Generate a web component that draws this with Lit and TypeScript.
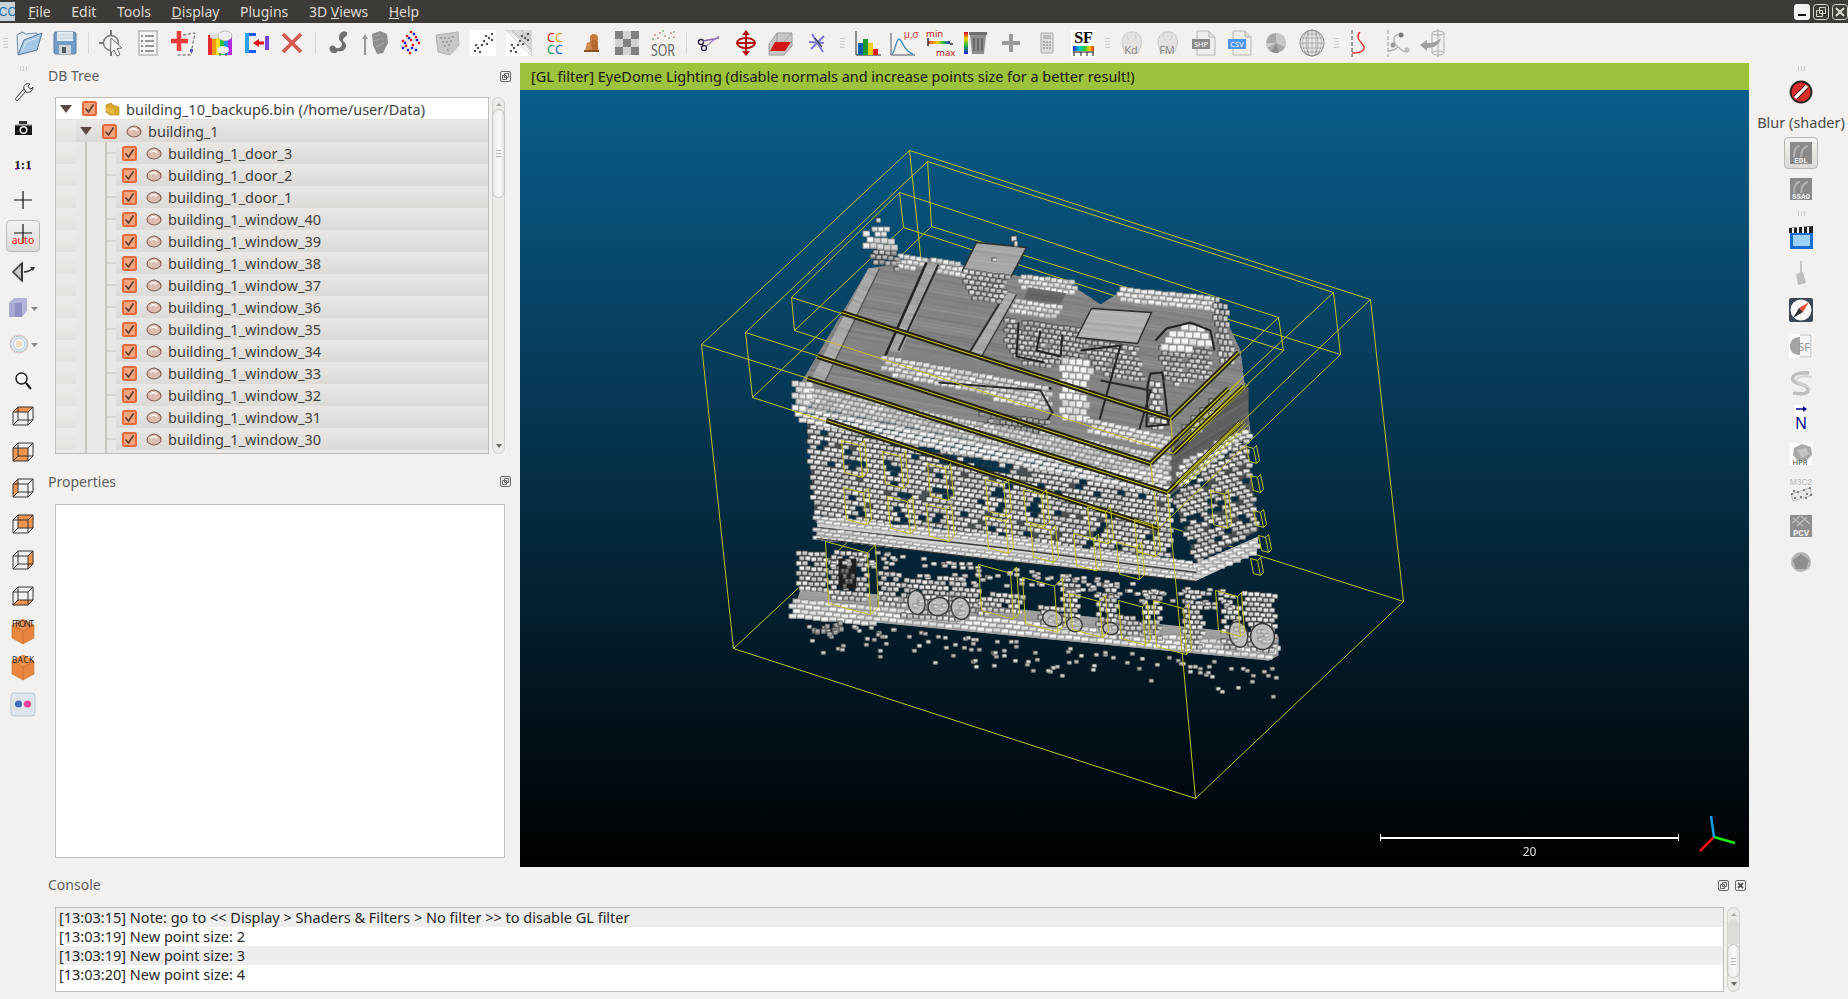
import { LitElement, css, html, svg, TemplateResult } from 'lit';
import { customElement } from 'lit/decorators.js';

type Pt = [number, number];

const bold = 'font-family="Liberation Sans" font-weight="700"';

// wire cube used by the view buttons, face says which side is orange
const cube = (face: string) => {
  const faces: Record<string, string> = {
    top: '6,12 11,7 26,7 21,12',
    front: '6,12 21,12 21,25 6,25',
    left: '6,12 11,7 11,20 6,25',
    back: '11,7 26,7 26,20 11,20',
    right: '21,12 26,7 26,20 21,25',
    bottom: '6,25 11,20 26,20 21,25',
  };
  return svg`<polygon points=${faces[face]} fill="#f0944e"/>
    <path d="M6 12h15v13H6zM11 7h15v13H11zM6 12l5-5M21 12l5-5M21 25l5-5M6 25l5-5" fill="none" stroke="#333" stroke-width="1"/>`;
};

const isoCube = (label: string) => svg`
  <polygon points="16,3 27,9 27,22 16,28 5,22 5,9" fill="#e8853f" stroke="#c9772f" stroke-width=".6"/>
  <polygon points="16,3 27,9 16,15 5,9" fill="#ee9450"/>
  <path d="M16 15v13M5 9l11 6 11-6" stroke="#c46c2a" fill="none" stroke-width=".7"/>
  <text x="16" y="10.500" text-anchor="middle" font-size="8" ${bold} fill="#222" textLength="22">${label}</text>`;

const brain = (label: string) => svg`
  <path d="M7 20C4 13 8 5 15 5c8-1 12 6 10 14l-3 7H9z" fill="#e4e3e1" stroke="#c9c8c5"/>
  <path d="M12 7c-2 3 0 6 2 6M19 7c2 3 0 6-2 6" stroke="#cfcecb" fill="none"/>
  <text x="15" y="27" text-anchor="middle" font-size="11" ${bold} fill="#8a8a8a">${label}</text>`;

const doc = (label: string, fill: string) => svg`
  <path d="M9 4h12l6 6v18H9z" fill="#eeeeec" stroke="#b5b5b3"/>
  <path d="M21 4v6h6" fill="#dcdcda" stroke="#b5b5b3"/>
  <rect x="4" y="12" width="18" height="10" fill=${fill}/>
  <text x="13" y="20" text-anchor="middle" font-size="7.5" ${bold} fill="#fff">${label}</text>`;

const greySquare = (label: string) => svg`
  <rect x="5" y="5" width="22" height="22" fill="#8a8a8a"/>
  <path d="M9 20c0-8 3-11 6-11M16 20c0-7 3-10 7-11" stroke="#b2b2b2" stroke-width="2" fill="none"/>
  <text x="16" y="26" text-anchor="middle" font-size="7.5" font-family="Liberation Mono" font-weight="700" fill="#f4f4f4">${label}</text>`;

const dots = (pts: number[][], fill: string, r = 1.1) =>
  pts.map((p) => svg`<rect x=${p[0] - r} y=${p[1] - r} width=${r * 2} height=${r * 2} fill=${fill}/>`);

const scatter = [[8, 24], [11, 21], [13, 25], [15, 18], [17, 14], [20, 17], [22, 11], [25, 7], [25, 13], [19, 9], [9, 18]];

const ICONS: Record<string, TemplateResult> = {
  open: svg`<path d="M5 27 4 8l5-3 4 2 11-1 1 5" fill="#e2ebf2" stroke="#6a8aa6"/>
    <path d="M5 28l6-15 18-7-5 17z" fill="#a6c8e4" stroke="#55789a"/>
    <path d="M9 24l4-9 13-5" stroke="#d8e8f4" fill="none"/>`,
  save: svg`<rect x="5" y="5" width="22" height="22" rx="2" fill="#6f9dc8" stroke="#5a7a9b"/>
    <rect x="8" y="5" width="16" height="9" fill="#e4ebf2"/><path d="M8 8h16M8 11h16" stroke="#b8c8d8"/>
    <rect x="10" y="18" width="12" height="9" fill="#cfd3d6"/><rect x="13" y="20" width="4" height="6" fill="#4f5a66"/>`,
  pick: svg`<circle cx="15" cy="16" r="7.500" fill="#f0f0ee" stroke="#777" stroke-width="1.400"/>
    <path d="M15 3v6M15 23v6M3 16h5" stroke="#777" stroke-width="2"/>
    <path d="M15 11l11 10-5 .6 3 6-3 1.400-3-6-3.500 3z" fill="#fff" stroke="#666"/>`,
  list: svg`<rect x="7" y="4" width="18" height="24" fill="#f6f6f4" stroke="#999"/>
    <path d="M13 9h9M13 14h9M13 19h9M13 24h9" stroke="#777" stroke-width="1.400"/>
    <path d="M9 9h2M9 14h2M9 19h2M9 24h2" stroke="#666" stroke-width="1.600"/>`,
  segment: svg`<path d="M11 4v20M3 14h17" stroke="#ee3b3b" stroke-width="4.500"/>
    <path d="M15 8l12-2-3 15-1 7H9" stroke="#555" stroke-dasharray="3 2" fill="none"/><rect x="22" y="22" width="3" height="3" fill="#5a5ae0"/>`,
  sheep: svg`<rect x="4" y="8" width="4" height="20" fill="#e82a2a"/><rect x="8" y="8" width="4" height="20" fill="#f59a10"/><rect x="12" y="8" width="4" height="20" fill="#f2e020"/>
    <rect x="16" y="8" width="4" height="20" fill="#28c040"/><rect x="20" y="8" width="4" height="20" fill="#1a8cf0"/><rect x="24" y="8" width="4" height="20" fill="#b02ae0"/>
    <ellipse cx="21" cy="9" rx="7" ry="5" fill="#eee" stroke="#888" stroke-width=".5"/><ellipse cx="10" cy="9" rx="4" ry="3" fill="#ddd"/>
    <ellipse cx="19" cy="23" rx="6" ry="4" fill="#f4f4f4"/><path d="M16 26v3M22 26v3" stroke="#555" stroke-width="1.200"/>`,
  merge: svg`<path d="M5 6h11v3H9v14h7v3H5z" fill="#1b5cf0"/><rect x="5" y="6" width="4" height="20" fill="#2aa0f0"/>
    <rect x="25" y="9" width="4" height="14" fill="#7244e0"/><path d="M13 16l6-4v2.500h5v3h-5V20z" fill="#e8121c"/>`,
  del: svg`<path d="M7 7l18 18M25 7 7 25" stroke="#d5584e" stroke-width="3.600"/>`,
  seg2: svg`<path d="M19 5c3-2 6 0 5 3-1 2-4 3-4 5s3 2 3 6-4 6-8 5c-1 2-5 3-7 1s-2-5 0-6 4 0 5 2c3 1 6-1 6-4 0-2-3-3-3-6 0-3 1-5 3-6z" fill="#707070"/>`,
  normal: svg`<path d="M6 28V10" stroke="#999" stroke-width="2"/><path d="M3 12l3-5 3 5z" fill="#999"/>
    <path d="M13 7l8-3 7 3 1 9-5 10-6 1-4-9z" fill="#8e8e8e"/><path d="M16 9l5-2M15 14l9-3M17 20l8-4" stroke="#aaa"/>`,
  spatter: svg`${dots([[16, 5], [12, 9], [21, 10], [8, 14], [16, 13], [24, 16], [11, 19], [18, 18], [15, 26]], '#e01818', 1.2)}${dots([[19, 7], [14, 11], [22, 13], [10, 16], [17, 21], [21, 23], [13, 23], [8, 21]], '#1818d8', 1.2)}`,
  tile: svg`<path d="M5 8 27 5l1 13-9 10-12-3z" fill="#c8c8c6" stroke="#b2b2b0"/>${dots([[10, 11], [14, 11], [18, 11], [22, 10], [12, 15], [16, 15], [20, 14], [14, 19], [18, 18], [17, 23]], '#8c8c8c', .8)}`,
  pts1: svg`<rect x="3" y="3" width="26" height="26" fill="#fff"/>${dots(scatter, '#555')}`,
  pts2: svg`<rect x="3" y="3" width="26" height="26" fill="#fff"/><path d="M3 3h26v26C24 18 14 9 3 3z" fill="#d9d9d9"/><path d="M9 3l20 20M18 3 29 13M3 3l26 26" stroke="#aaa" stroke-width=".6"/>${dots(scatter, '#555')}`,
  ccc: svg`<text x="8" y="15" font-size="12.500" ${bold} fill="#e01818">C</text><text x="16" y="15" font-size="12.500" ${bold} fill="#e6a010">C</text>
    <text x="8" y="27" font-size="12.500" ${bold} fill="#1a9a50">C</text><text x="16" y="27" font-size="12.500" ${bold} fill="#1a60d0">C</text>`,
  figure: svg`<circle cx="19" cy="11" r="4" fill="#c87a3a"/><rect x="15" y="13" width="8" height="11" rx="2" fill="#b56a30"/><path d="M10 24l2-8 4-2 1 10z" fill="#d08a4a"/><rect x="9" y="23" width="15" height="2" fill="#8a5526"/>`,
  checker: svg`<rect x="4" y="4" width="24" height="24" fill="#d2d2d2"/>
    <path d="M4 4h8v8H4zM20 4h8v8h-8zM12 12h8v8h-8zM4 20h8v8H4zM20 20h8v8h-8z" fill="#808080"/>`,
  sor: svg`<text x="16" y="29" text-anchor="middle" font-size="17" ${bold} fill="#666" textLength="24" lengthAdjust="spacingAndGlyphs">SOR</text>
    ${dots([[8, 8], [13, 6], [18, 9], [24, 6], [27, 10], [11, 11]], '#d09090', .9)}${dots([[6, 12], [16, 4], [22, 11], [27, 5]], '#90b890', .9)}`,
  cut: svg`<circle cx="7" cy="15" r="2.500" fill="none" stroke="#2a1a3a" stroke-width="1.300"/><circle cx="10" cy="21" r="2.500" fill="none" stroke="#2a1a3a" stroke-width="1.300"/>
    <path d="M9 14 25 11" stroke="#8060a0" stroke-width="1.500"/><path d="M12 19 25 9" stroke="#a080b8" stroke-width="1.500"/>`,
  move: svg`<path d="M16 4v24M7 16h18" stroke="#b01010" stroke-width="2"/><path d="M12 8l4-5 4 5zM12 24l4 5 4-5z" fill="#b01010"/>
    <ellipse cx="16" cy="16" rx="9" ry="5" fill="none" stroke="#b01010" stroke-width="2"/>`,
  box: svg`<path d="M3 17 11 6h15v13l-8 9H3z" fill="#c6c6c4" stroke="#9a9a98"/><path d="M4 24l5-9h16l-6 9z" fill="#d21616"/><path d="M11 6v9M26 6l-8 9" stroke="#9a9a98"/>`,
  star: svg`<path d="M10 7l11 18M22 9 9 22M7 15l15 1" stroke="#7a7ad0" stroke-width="2"/><path d="M13 11l7 9" stroke="#333" stroke-width="1.200"/>`,
  hist: svg`<path d="M5 4v24h25" stroke="#222" fill="none"/><rect x="7" y="16" width="5" height="12" fill="#0b5fa8"/><rect x="12" y="12" width="5" height="16" fill="#1a9a30"/><rect x="17" y="16" width="5" height="12" fill="#e8d010"/><rect x="22" y="22" width="5" height="6" fill="#e01818"/>`,
  stats: svg`<path d="M4 6v22h24" stroke="#556" fill="none"/><path d="M5 27c3-1 4-15 7-15s5 13 14 15" stroke="#3a86b8" fill="none" stroke-width="1.300"/>
    <text x="17" y="11" font-size="10" font-family="Liberation Sans" fill="#d84040">μ,σ</text>`,
  minmax: svg`<text x="3" y="10" font-size="9.500" ${bold} fill="#c01818">min</text><text x="13" y="29" font-size="9.500" ${bold} fill="#c01818">max</text>
    <defs><linearGradient id="mm"><stop offset="0" stop-color="#d33"/><stop offset=".4" stop-color="#fc0"/><stop offset=".7" stop-color="#2b4"/><stop offset="1" stop-color="#33c"/></linearGradient></defs>
    <rect x="5" y="14" width="22" height="3" fill="url(#mm)"/><path d="M5 11v8M27 17h3" stroke="#333" stroke-width="1.500"/>`,
  sfdel: svg`<defs><linearGradient id="bar" x1="0" y1="0" x2="0" y2="1"><stop offset="0" stop-color="#c02"/><stop offset=".3" stop-color="#fc0"/><stop offset=".6" stop-color="#2b4"/><stop offset="1" stop-color="#22c"/></linearGradient></defs>
    <rect x="5" y="5" width="4" height="22" fill="url(#bar)"/><path d="M11 8h16l-2 19H13z" fill="#8e8e8c"/><rect x="10" y="5" width="18" height="3" fill="#6e6e6c"/><path d="M15 11v13M19 11v13M23 11v13" stroke="#555" stroke-width="1.300"/>`,
  plus: svg`<path d="M16 7v18M7 16h18" stroke="#999" stroke-width="4"/>`,
  calc: svg`<rect x="10" y="6" width="12" height="20" rx="1" fill="#dcdcda" stroke="#aaa"/><rect x="12" y="8" width="8" height="4" fill="#bbb"/><path d="M12 15h8M12 18h8M12 21h8" stroke="#999" stroke-width="1.400" stroke-dasharray="2 1"/>`,
  sf: svg`<rect x="4" y="3" width="25" height="27" fill="#fff"/><text x="16.500" y="16" text-anchor="middle" font-size="16" font-family="Liberation Serif" font-weight="700" fill="#000">SF</text>
    <defs><linearGradient id="sfb"><stop offset="0" stop-color="#22c"/><stop offset=".3" stop-color="#0cd"/><stop offset=".55" stop-color="#2c3"/><stop offset=".8" stop-color="#fc0"/><stop offset="1" stop-color="#e22"/></linearGradient></defs>
    <rect x="6" y="19" width="21" height="5" fill="url(#sfb)"/><path d="M6 25h21M7 25v4M14 25v4M20 25v4M26 25v4" stroke="#111"/>`,
  kd: brain('Kd'),
  fm: brain('FM'),
  shp: doc('SHP', '#8a8a8a'),
  csv: doc('CSV', '#4f95ee'),
  disk: svg`<circle cx="16" cy="16" r="10" fill="#a8a8a8"/><path d="M16 16V6a10 10 0 0 1 9 14z" fill="#c8c8c8"/><path d="M16 16l-9 5a10 10 0 0 1-1-5z" fill="#d0d0d0"/><path d="M16 16l3 9.500a10 10 0 0 1-8-1z" fill="#8e8e8e"/>`,
  globe: svg`<ellipse cx="16" cy="16" rx="12" ry="13" fill="#e8e8e6" stroke="#888"/><ellipse cx="16" cy="16" rx="6" ry="13" fill="none" stroke="#999" stroke-width=".7"/><ellipse cx="16" cy="16" rx="9.500" ry="13" fill="none" stroke="#999" stroke-width=".7"/>
    <path d="M4 16h24M5 11h22M5 21h22M8 7h16M8 25h16M16 3v26M12 3v26M20 3v26" stroke="#999" stroke-width=".7"/>`,
  sred: svg`<path d="M7 3v27" stroke="#444" stroke-dasharray="4 2"/><path d="M15 5c-5 5 0 9 3 13s0 8-11 8" stroke="#ee2a2a" fill="none" stroke-width="1.400"/>`,
  sgrey: svg`<path d="M7 3v27" stroke="#999" stroke-dasharray="4 2"/><path d="M17 7c-7 4-4 10 0 13s4 5 9 5M17 20c-3 3-5 4-10 4" stroke="#aaa" fill="none" stroke-width="1.200"/><circle cx="20" cy="8" r="2.500" fill="#777"/><circle cx="26" cy="23" r="2.500" fill="#bbb"/><circle cx="12" cy="18" r="2.500" fill="#999"/>`,
  unroll: svg`<ellipse cx="21" cy="6" rx="6" ry="2" fill="none" stroke="#aaa"/><path d="M15 6v20M27 6v20M21 2v28" stroke="#aaa"/><ellipse cx="21" cy="26" rx="6" ry="2" fill="none" stroke="#aaa"/>
    <path d="M3 18l7-5v3c6 0 10-1 14-5-1 6-6 10-14 10v3z" fill="#a0a09e"/>`,
  wrench: svg`<path d="M10 23l9-10" stroke="#333" stroke-width="3.600" stroke-linecap="round"/><path d="M10 23l9-10" stroke="#f2f2f0" stroke-width="2" stroke-linecap="round"/>
    <path d="M17 13c-1-4 2-6 6-5l-2 2 1 2 2 1 2-2c0 4-3 6-7 5z" fill="#f2f2f0" stroke="#333"/>`,
  camera: svg`<rect x="8" y="12" width="17" height="11" fill="#161616"/><rect x="12" y="9" width="8" height="3" fill="#333"/><rect x="8" y="12" width="17" height="1.500" fill="#bbb"/><circle cx="16.500" cy="18" r="4" fill="#eee"/><circle cx="16.500" cy="18" r="2.500" fill="#111"/>`,
  oneone: svg`<text x="16" y="21" text-anchor="middle" font-size="13" font-family="Liberation Serif" font-weight="700" fill="#111">1:1</text><path d="M8 21h3M21 21h3" stroke="#90c"/>`,
  cross: svg`<path d="M16 7v18M7 16h18" stroke="#111" stroke-width="1.200"/>`,
  auto: svg`<path d="M16 4v19M7 13h18" stroke="#111" stroke-width="1.200"/><text x="16" y="24" text-anchor="middle" font-size="10.500" ${bold} fill="#f01010">auto</text>`,
  persp: svg`<path d="M15 7 6 16l9 9z" fill="#c8c8c6" stroke="#333" stroke-width="1.500"/><path d="M15 7v18" stroke="#333" stroke-width="2"/><path d="M17 16c3 0 7-2 9-4" stroke="#333" stroke-width="1.400" fill="none"/><path d="M23 11h5l-2 4z" fill="#333"/>`,
  glass: svg`<circle cx="14.500" cy="14.500" r="5.500" fill="#fff" stroke="#111" stroke-width="1.400"/><path d="M19 19l5 6" stroke="#111" stroke-width="2"/>`,
  front: isoCube('FRONT'),
  backc: isoCube('BACK'),
  flickr: svg`<rect x="4" y="5" width="24" height="23" rx="3" fill="#dfe5ea" stroke="#bcc6cf"/><circle cx="11.500" cy="16" r="3.600" fill="#3f6fc0"/><circle cx="20.500" cy="16" r="3.600" fill="#f0409a"/>`,
  stop: svg`<circle cx="16" cy="16" r="10.500" fill="#dd2c2c" stroke="#222" stroke-width="1.800"/><path d="M10 22 22 10" stroke="#fff" stroke-width="3"/><path d="M9 20l11-11M12 23l11-11" stroke="#222" stroke-width="1"/>`,
  edl: greySquare('EDL'),
  ssao: greySquare('SSAO'),
  clap: svg`<rect x="5" y="11" width="23" height="16" fill="#1a6ed0"/><rect x="8" y="13" width="17" height="11" fill="#9cd2f6"/><path d="M4 6 28 4v7H4z" fill="#222"/><path d="M8 6v5M13 5v6M18 5v6M23 5v6" stroke="#eee" stroke-width="2"/>`,
  brush: svg`<path d="M15 3h2v12h-2z" fill="#c4c4c2"/><path d="M11 16l7-2 3 11-8 2z" fill="#bebebc"/>`,
  compass: svg`<rect x="4" y="4" width="24" height="24" rx="2" fill="#3c4656"/><circle cx="16" cy="16" r="10.500" fill="#fff"/><path d="M16 6v20M6 16h20M9 9l14 14" stroke="#ccc" stroke-width=".5"/><path d="M24 8l-6 10-4-4z" fill="#f05040"/><path d="M8 24l6-10 4 4z" fill="#333"/>`,
  sfgrey: svg`<rect x="4" y="4" width="24" height="24" fill="#fff"/><path d="M15 7C8 7 5 11 5 16s3 9 10 9z" fill="#a4a4a4"/><path d="M15 5h11v22H15" fill="#f4f4f4" stroke="#bbb"/><text x="19" y="21" text-anchor="middle" font-size="11" ${bold} fill="#999">SF</text>`,
  ss: svg`<path d="M24 7C13 6 6 9 8 14s14 3 15 9-8 5-15 4" stroke="#bdbdbb" stroke-width="3.500" fill="none"/><path d="M27 11C18 9 11 11 12 15s13 4 13 9" stroke="#d4d4d2" stroke-width="2" fill="none"/>`,
  north: svg`<rect x="10" y="3" width="12" height="25" fill="#fff"/><path d="M11 7h9" stroke="#000090" stroke-width="1.500"/><path d="M18 4l4 3-4 3z" fill="#000090"/><text x="16" y="27" text-anchor="middle" font-size="16" font-family="Liberation Sans" fill="#000090">N</text>`,
  hpr: svg`<rect x="5" y="5" width="22" height="22" fill="#fff"/><path d="M9 10l8-4 9 3 1 8-5 5-9 1-5-6z" fill="#a8a8a8"/><path d="M12 12l9-2 3 6-7 4z" fill="#c4c4c4"/><text x="15" y="27" text-anchor="middle" font-size="7.500" ${bold} fill="#444">HPR</text>`,
  m3c2: svg`<text x="16" y="11" text-anchor="middle" font-size="8.500" font-family="Liberation Sans" fill="#b4b4b4">M3C2</text><path d="M6 20 25 14l2 7-19 6z" fill="#e8e8e6" stroke="#c0c0be"/>${dots([[7, 20], [10, 24], [13, 18], [16, 23], [19, 16], [22, 20], [25, 14], [26, 21], [9, 17], [21, 24]], '#666', .9)}`,
  pcv: svg`<rect x="5" y="5" width="22" height="22" fill="#8e8e8e"/><path d="M7 13l8-7M12 16l10-9M8 8l10 8M16 6l9 8" stroke="#bbb" stroke-width="1.400"/><text x="16" y="26" text-anchor="middle" font-size="9" font-family="Liberation Mono" font-weight="700" fill="#f4f4f4">PCV</text>`,
  penta: svg`<circle cx="16" cy="16" r="10" fill="#b4b4b4"/><polygon points="16,8 24,14 21,23 11,23 8,14" fill="#8e8e8e"/>`,
};

const icon = (name: string) =>
  html`<span class="ico"><svg viewBox="0 0 32 32" width="32" height="32">${ICONS[name]}</svg></span>`;

const checkbox = html`<svg class="cb" viewBox="0 0 15 15" width="15" height="15">
  <rect x="1" y="1" width="13" height="13" rx="1.500" fill="#f2a580" stroke="#e4683a" stroke-width="2"/>
  <path d="M3.500 7.500l3 3.500 5-7.500" fill="none" stroke="#54382c" stroke-width="1.500"/></svg>`;

const cloudIcon = html`<svg class="cloud" viewBox="0 0 16 13" width="16" height="13">
  <path d="M1 7c0-3 3-5 5-5.500 2-1 4-.5 6 1 2 1 3 3 3 4.500 0 3-4 5-7 5S1 10 1 7z" fill="#dcbcb0" stroke="#7d5c50" stroke-width="1.100"/>
  <path d="M4 5.500c2-2.500 5-2.500 7 0" stroke="#f8eeea" stroke-width="2" fill="none"/></svg>`;

const floatIcon = html`<svg class="float" viewBox="0 0 11 11" width="11" height="11">
  <rect x=".5" y=".5" width="10" height="10" rx="1.500" fill="none" stroke="#666"/>
  <path d="M4.500 2.500h4v4h-4zM2.500 4.500h4v4h-4z" fill="#f2f1f0" stroke="#666"/></svg>`;

const closeIcon = html`<svg class="float" viewBox="0 0 11 11" width="11" height="11">
  <rect x=".5" y=".5" width="10" height="10" rx="1.500" fill="none" stroke="#666"/>
  <path d="M3 3l5 5M8 3 3 8" stroke="#555" stroke-width="1.800"/></svg>`;

const expander = html`<svg class="exp" viewBox="0 0 12 8" width="12" height="8"><path d="M0 0h12L6 8z" fill="#5c4a42"/></svg>`;

// window openings on the front wall, left edge of each one
const UPPER_WINDOWS = [841, 882, 927, 985, 1023, 1087, 1134];
const LOWER_WINDOWS = [843, 887, 926, 985, 1030, 1073, 1116];

const HARD_MESH = '#3a3a38';
const SOFT_MESH = '#8c8c8a';

@customElement('cloud-view')
export class CloudView extends LitElement {
  static styles = css`
    :host {
      position: absolute;
      inset: 0;
      display: block;
    }
    canvas {
      display: block;
    }
  `;

  private rnd = 0;
  private mesh = HARD_MESH;

  private rand() {
    // mulberry32, so the cloud comes out the same on every load
    this.rnd = (this.rnd + 0x6d2b79f5) | 0;
    let t = Math.imul(this.rnd ^ (this.rnd >>> 15), 1 | this.rnd);
    t = (t + Math.imul(t ^ (t >>> 7), 61 | t)) ^ t;
    return ((t ^ (t >>> 14)) >>> 0) / 4294967296;
  }

  private inside(x: number, y: number, poly: Pt[]) {
    let hit = false;
    for (let i = 0, j = poly.length - 1; i < poly.length; j = i++) {
      const [xi, yi] = poly[i];
      const [xj, yj] = poly[j];
      if (yi > y !== yj > y && x < ((xj - xi) * (y - yi)) / (yj - yi) + xi) hit = !hit;
    }
    return hit;
  }

  // same colour as the view background, for holes punched through a wall
  private bgAt(y: number) {
    const t = 1 - (y - 63) / 804;
    return `rgb(${Math.round(10 * t)},${Math.round(97 * t)},${Math.round(144 * t)})`;
  }

  private point(c: CanvasRenderingContext2D, x: number, y: number, w: number, h: number, g: number) {
    const px = Math.round(x);
    const py = Math.round(y);
    c.fillStyle = this.mesh;
    c.fillRect(px - 1, py - 1, w + 1, h + 1);
    c.fillStyle = `rgb(${g},${g},${g})`;
    c.fillRect(px, py, w, h);
    c.fillStyle = 'rgba(255,255,255,.3)';
    c.fillRect(px, py, w, 1);
    c.fillStyle = 'rgba(40,40,40,.3)';
    c.fillRect(px, py + h - 1, w, 1);
  }

  private bricks(
    c: CanvasRenderingContext2D,
    poly: Pt[],
    w: number,
    h: number,
    slope: number,
    density: number,
    base = 190,
    skip?: (x: number, y: number) => boolean
  ) {
    const xs = poly.map((p) => p[0]);
    const ys = poly.map((p) => p[1]);
    const minX = Math.min(...xs);
    const maxX = Math.max(...xs);
    const minY = Math.min(...ys);
    const maxY = Math.max(...ys);
    const span = Math.abs(slope) * (maxX - minX);
    let row = 0;
    for (let y0 = minY - span - h; y0 < maxY + span; y0 += h + 1, row++) {
      for (let x = minX + (row % 2) * (w / 2) - w; x < maxX; x += w + 1) {
        const y = y0 + (x - minX) * slope;
        if (!this.inside(x + w / 2, y + h / 2, poly)) continue;
        if (skip && (skip(x, y) || this.rand() >= density)) {
          c.fillStyle = this.bgAt(y);
          c.fillRect(Math.round(x) - 1, Math.round(y) - 1, w + 1, h + 1);
          continue;
        }
        if (this.rand() >= density) continue;
        this.point(c, x, y, w, h, Math.min(245, base + Math.floor(this.rand() * 50)));
      }
    }
  }

  private fill(c: CanvasRenderingContext2D, poly: Pt[], color: string) {
    c.beginPath();
    poly.forEach((p, i) => (i ? c.lineTo(p[0], p[1]) : c.moveTo(p[0], p[1])));
    c.closePath();
    c.fillStyle = color;
    c.fill();
  }

  private slab(c: CanvasRenderingContext2D, poly: Pt[], slope: number, base: number) {
    c.save();
    this.fill(c, poly, `rgb(${base},${base},${base})`);
    c.clip();
    const xs = poly.map((p) => p[0]);
    const ys = poly.map((p) => p[1]);
    const minX = Math.min(...xs);
    const maxX = Math.max(...xs);
    const span = Math.abs(slope) * (maxX - minX);
    for (let y = Math.min(...ys) - span; y < Math.max(...ys) + span; y += 3) {
      const g = base + Math.floor((this.rand() - 0.5) * 22);
      c.strokeStyle = `rgb(${g},${g},${g})`;
      c.lineWidth = 2;
      c.beginPath();
      c.moveTo(minX, y);
      c.lineTo(maxX, y + slope * (maxX - minX));
      c.stroke();
    }
    c.restore();
  }

  private line(c: CanvasRenderingContext2D, pts: Pt[], color: string, width: number) {
    c.strokeStyle = color;
    c.lineWidth = width;
    c.beginPath();
    pts.forEach((p, i) => (i ? c.lineTo(p[0], p[1]) : c.moveTo(p[0], p[1])));
    c.stroke();
  }

  private yellow(c: CanvasRenderingContext2D, ...segs: [Pt, Pt][]) {
    segs.forEach((s) => this.line(c, s, '#c4c41c', 1));
  }

  private halo(c: CanvasRenderingContext2D, a: Pt, b: Pt) {
    this.line(c, [a, b], '#24220e', 5);
    this.line(c, [a, b], '#c4c41c', 1.2);
  }

  firstUpdated() {
    const canvas = this.renderRoot.querySelector('canvas') as HTMLCanvasElement;
    const c = canvas.getContext('2d')!;
    // points below are in page pixels, the canvas starts at the viewport corner
    c.translate(-520, -63);
    c.translate(0.5, 0.5);
    this.rnd = 1234;

    // bounding boxes: a back top, b left top, cc right top, d front top, then the bottom ring
    const big = { a: [909, 150], b: [701, 344], cc: [1370, 299], d: [1167, 492], e: [733, 648], f: [941, 454], g: [1403, 601], h: [1195, 798] } as Record<string, Pt>;
    const mid = { a: [927, 161], b: [745, 332], cc: [1333, 292], d: [1150, 463], e: [752, 397], f: [931, 226], g: [1340, 354], h: [1158, 528] } as Record<string, Pt>;
    const small = { a: [899, 192], b: [791, 297], cc: [1278, 317], d: [1170, 418], e: [794, 330], f: [903, 227], g: [1283, 350], h: [1173, 453] } as Record<string, Pt>;
    const boxes = [big, mid, small];

    boxes.forEach((k) => this.yellow(c, [k.a, k.b], [k.a, k.cc], [k.a, k.f], [k.f, k.e], [k.f, k.g]));

    this.drawBuilding(c);

    boxes.forEach((k) => this.yellow(c, [k.b, k.d], [k.cc, k.d], [k.d, k.h], [k.b, k.e], [k.cc, k.g], [k.e, k.h], [k.g, k.h]));

    this.halo(c, [841, 312], [1170, 418]);
    this.halo(c, [817, 356], [1150, 463]);
    this.halo(c, [807, 378], [1167, 492]);
    this.halo(c, [826, 420], [1158, 528]);
    this.halo(c, [1170, 418], [1238, 352]);
    this.halo(c, [1150, 463], [1228, 388]);
    this.halo(c, [1167, 492], [1240, 422]);
    this.halo(c, [1173, 453], [1243, 386]);
    for (let i = 1; i < 5; i++) {
      this.yellow(c, [[1176 + i * 3, 438 + i], [1236 + i * 3, 380 + i]]);
      this.yellow(c, [[1172 + i * 3, 482 + i], [1236 + i * 3, 420 + i]]);
    }

    this.drawWindows(c);
  }

  private drawBuilding(c: CanvasRenderingContext2D) {
    // roof, light streaks running along the slope
    const roof: Pt[] = [[868, 268], [930, 258], [1020, 276], [1070, 284], [1100, 304], [1122, 290], [1212, 298], [1226, 320], [1240, 350], [1250, 432], [1170, 486], [800, 400], [799, 385]];
    this.slab(c, roof, 0.17, 132);

    // back rims
    this.mesh = SOFT_MESH;
    this.bricks(c, [[897, 253], [930, 256], [928, 270], [897, 266]], 5, 4, 0.15, 1, 205);
    this.bricks(c, [[930, 258], [968, 266], [964, 278], [930, 270]], 5, 4, 0.15, 1, 205);
    this.bricks(c, [[1119, 286], [1216, 297], [1214, 311], [1116, 300]], 6, 4, 0.1, 1, 205);
    this.mesh = HARD_MESH;
    this.bricks(c, [[1212, 298], [1226, 302], [1234, 364], [1220, 364]], 4, 5, 0.1, 1, 175);

    // dark parapet lines on the left part of the roof
    this.slab(c, [[926, 262], [938, 264], [900, 352], [886, 350]], 0.17, 165);
    this.line(c, [[926, 262], [884, 357]], '#222', 2.5);
    this.line(c, [[938, 264], [898, 350]], '#2a2a2a', 2);
    this.slab(c, [[1006, 292], [1016, 294], [978, 360], [966, 356]], 0.17, 170);
    this.line(c, [[1005, 293], [969, 352]], '#2a2a2a', 2);
    this.line(c, [[1016, 294], [980, 358]], '#3a3a3a', 1.5);
    this.line(c, [[884, 357], [950, 370], [1051, 388]], '#222', 2.5);
    this.slab(c, [[868, 268], [879, 268], [824, 382], [810, 380]], 0.4, 168);
    this.line(c, [[879, 268], [824, 382]], '#555', 1.5);

    // chimney
    this.bricks(c, [[872, 246], [897, 250], [897, 269], [872, 265]], 5, 4, 0.1, 1, 150);
    this.mesh = SOFT_MESH;
    this.bricks(c, [[866, 233], [897, 237], [897, 251], [866, 249]], 6, 5, 0.1, 1, 205);
    this.bricks(c, [[874, 226], [888, 226], [888, 236], [874, 236]], 5, 4, 0, 1, 215);
    this.mesh = HARD_MESH;
    this.point(c, 876, 218, 4, 4, 215);

    // block with the flat top
    this.slab(c, [[976, 242], [1026, 247], [1010, 277], [962, 270]], 0.12, 165);
    this.line(c, [[976, 242], [1026, 247], [1010, 277], [962, 270], [976, 242]], '#2e2e2c', 1.5);
    this.bricks(c, [[962, 270], [1010, 277], [1002, 304], [970, 300]], 5, 4, 0.14, 0.97, 175);
    this.point(c, 992, 258, 4, 3, 225);
    this.point(c, 1011, 236, 5, 5, 215);
    this.point(c, 1014, 241, 3, 5, 215);

    // small box behind
    this.mesh = SOFT_MESH;
    this.bricks(c, [[1020, 275], [1075, 281], [1074, 296], [1020, 288]], 5, 4, 0.12, 1, 205);
    this.slab(c, [[1028, 287], [1066, 293], [1058, 306], [1022, 302]], 0.14, 105);
    this.bricks(c, [[1012, 300], [1062, 307], [1058, 320], [1008, 312]], 5, 4, 0.14, 1, 205);
    this.mesh = HARD_MESH;

    // block two and turret
    this.bricks(c, [[1006, 318], [1082, 330], [1082, 362], [1030, 368], [1006, 350]], 5, 4, 0.14, 0.95, 165);
    this.line(c, [[1018, 322], [1016, 356], [1044, 362]], '#222', 2);
    this.line(c, [[1040, 330], [1036, 350], [1060, 356], [1062, 334]], '#222', 2);
    this.slab(c, [[1091, 308], [1151, 312], [1137, 343], [1076, 337]], 0.1, 175);
    this.line(c, [[1091, 308], [1151, 312], [1137, 343], [1076, 337], [1091, 308]], '#2e2e2c', 1.5);
    this.bricks(c, [[1076, 337], [1137, 345], [1144, 380], [1104, 378]], 5, 4, 0.14, 0.97, 170);
    this.bricks(c, [[1159, 345], [1209, 347], [1212, 376], [1170, 386], [1158, 372]], 5, 4, 0.1, 0.97, 170);
    this.mesh = SOFT_MESH;
    this.bricks(c, [[1160, 342], [1166, 330], [1182, 326], [1206, 328], [1212, 345], [1186, 352], [1162, 350]], 7, 6, 0.08, 1, 215);
    this.mesh = HARD_MESH;
    this.line(c, [[1155, 340], [1166, 328], [1190, 322], [1210, 330], [1214, 350]], '#222', 2);
    this.bricks(c, [[1148, 376], [1160, 382], [1166, 430], [1150, 430]], 5, 5, 0.1, 1, 195);
    this.line(c, [[1147, 385], [1150, 373], [1162, 372], [1168, 424], [1146, 426], [1147, 385]], '#222', 2);
    this.mesh = SOFT_MESH;
    this.bricks(c, [[1062, 360], [1092, 360], [1086, 420], [1058, 420]], 6, 6, 0.1, 1, 210);
    this.mesh = HARD_MESH;
    this.line(c, [[1080, 350], [1120, 345], [1096, 430]], '#222', 2);
    this.line(c, [[1100, 380], [1150, 390], [1138, 432]], '#2a2a28', 2);

    // low wall that closes the roof at the front
    this.mesh = SOFT_MESH;
    this.bricks(c, [[884, 357], [1052, 388], [1050, 412], [884, 372]], 6, 4, 0.19, 1, 200);
    this.mesh = HARD_MESH;
    this.line(c, [[938, 382], [1040, 390], [1052, 412], [1038, 432]], '#2a2a28', 2);
    this.bricks(c, [[975, 410], [1050, 418], [1044, 434], [975, 426]], 5, 4, 0.12, 0.9, 140);
    this.mesh = SOFT_MESH;
    this.bricks(c, [[1090, 416], [1170, 434], [1170, 452], [1090, 432]], 6, 4, 0.22, 1, 205);
    this.mesh = HARD_MESH;

    // right side of the top floor
    this.slab(c, [[1170, 440], [1248, 386], [1248, 436], [1170, 495]], -0.6, 95);
    this.mesh = SOFT_MESH;
    this.bricks(c, [[1180, 462], [1250, 426], [1250, 438], [1175, 492]], 6, 4, -0.4, 1, 205);
    this.mesh = HARD_MESH;
    this.bricks(c, [[1178, 426], [1212, 400], [1214, 422], [1186, 436]], 5, 5, -0.3, 0.85, 150);

    // front wall, upper storey, with holes at the window openings and under the cornice
    const inOpening = (x: number, y: number) => {
      const hitUp = UPPER_WINDOWS.some((wx) => {
        const wy = 440 + (wx - 841) * 0.27;
        return x > wx + 3 && x < wx + 15 && y > wy + 8 && y < wy + 28;
      });
      const hitLow = LOWER_WINDOWS.some((wx) => {
        const wy = 487 + (wx - 843) * 0.2;
        return x > wx + 3 && x < wx + 17 && y > wy + 8 && y < wy + 30;
      });
      const underTop = 419 + (x - 798) * 0.2;
      const hitTop = x > 885 && x < 1010 && y > underTop + 2 && y < underTop + 12;
      return (hitUp && this.rand() < 0.45) || (hitLow && this.rand() < 0.45) || (hitTop && this.rand() < 0.6);
    };
    const wall: Pt[] = [[806, 418], [1170, 494], [1172, 562], [1000, 542], [815, 522]];
    this.fill(c, wall, '#4c5052');
    this.bricks(c, wall, 6, 4, 0.15, 0.95, 192, inOpening);

    // cornice under the roof, drawn after the wall so it overlaps it
    this.mesh = SOFT_MESH;
    this.bricks(c, [[796, 386], [815, 390], [1170, 456], [1170, 482], [801, 412]], 5, 4, 0.205, 1, 185);
    this.bricks(c, [[798, 406], [1170, 478], [1170, 495], [798, 419]], 7, 4, 0.2, 1, 218);
    this.bricks(c, [[795, 382], [810, 382], [812, 406], [795, 410]], 6, 5, 0.1, 1, 205);
    this.mesh = HARD_MESH;

    // right wall
    const side: Pt[] = [[1172, 496], [1246, 440], [1258, 530], [1196, 562]];
    this.fill(c, side, '#4c5052');
    this.bricks(c, side, 6, 4, -0.3, 0.92, 188, () => this.rand() < 0.04);

    // mid cornice, two pale bands with a thin dark joint
    this.slab(c, [[817, 517], [1000, 537], [1196, 563], [1258, 536], [1256, 552], [1196, 580], [1000, 560], [816, 538]], 0.11, 205);
    this.mesh = SOFT_MESH;
    this.bricks(c, [[816, 517], [1000, 537], [1196, 563], [1196, 570], [1000, 545], [816, 525]], 7, 3, 0.11, 1, 218);
    this.line(c, [[816, 527], [1000, 547], [1196, 572]], '#3a3a38', 1.5);
    this.bricks(c, [[816, 529], [1000, 550], [1196, 574], [1196, 580], [1000, 560], [816, 538]], 7, 3, 0.11, 1, 212);
    this.bricks(c, [[1196, 563], [1258, 536], [1256, 552], [1196, 580]], 7, 4, -0.4, 1, 212);
    this.mesh = HARD_MESH;
    this.line(c, [[816, 538], [1000, 560], [1196, 581]], '#2a2a28', 1);

    // slab at the bottom, grey on top and pale along its front edge
    this.slab(c, [[801, 586], [1278, 636], [1278, 655], [1268, 660], [792, 614]], 0.1, 160);
    this.mesh = SOFT_MESH;
    this.bricks(c, [[792, 600], [1278, 646], [1274, 660], [792, 616]], 7, 4, 0.097, 1, 210);
    this.mesh = HARD_MESH;

    // ground floor columns
    const cols: [number, number, number, number][] = [
      [798, 826, 552, 592], [830, 868, 552, 600], [880, 901, 572, 606], [903, 962, 577, 620], [951, 980, 583, 614],
      [980, 1023, 594, 614], [1040, 1060, 606, 626], [1062, 1080, 578, 628], [1098, 1119, 583, 634], [1120, 1142, 616, 638],
      [1144, 1160, 590, 640], [1184, 1205, 590, 648], [1223, 1241, 600, 648], [1244, 1276, 593, 652],
    ];
    cols.forEach(([x0, x1, y0, y1]) => this.bricks(c, [[x0, y0], [x1, y0], [x1, y1], [x0, y1]], 5, 4, 0.08, 0.9, 190));
    c.fillStyle = '#1e1e1c';
    c.fillRect(838, 558, 18, 30);
    this.bricks(c, [[838, 558], [856, 558], [850, 590], [842, 590]], 3, 4, 0, 0.55, 90);

    // bushes in front: pale clumps with the dark outline the shader puts round them
    [[916, 602, 8, 12], [938, 606, 10, 9], [960, 608, 8, 11], [1052, 618, 9, 8], [1074, 624, 7, 7], [1110, 628, 6, 6], [1238, 634, 9, 13], [1262, 636, 11, 13]].forEach(([x, y, a, b]) => {
      c.beginPath();
      c.ellipse(x, y, a + this.rand() * 2, b, this.rand() - 0.5, 0, Math.PI * 2);
      c.fillStyle = '#bdbdbb';
      c.fill();
      c.strokeStyle = '#3a3a38';
      c.lineWidth = 1.5;
      c.stroke();
      for (let i = 0; i < a; i++) {
        this.mesh = SOFT_MESH;
        this.point(c, x - a * 0.6 + this.rand() * a, y - b * 0.6 + this.rand() * b, 4, 3, 215);
        this.mesh = HARD_MESH;
      }
    });

    // loose points below the upper cornice and under the slab
    for (let i = 0; i < 130; i++) {
      const x = 830 + this.rand() * 400;
      const base = 540 + (x - 816) * 0.11;
      this.point(c, x, base + 4 + this.rand() * 20, 5, 3, 190 + Math.floor(this.rand() * 50));
    }
    for (let i = 0; i < 115; i++) {
      const x = 805 + this.rand() * 470;
      const base = 616 + (x - 792) * 0.1;
      const d = Math.pow(this.rand(), 1.5) * 30;
      this.point(c, x, base + 2 + d, 4, 3, 170 + Math.floor(this.rand() * 60));
    }
    for (let i = 0; i < 18; i++) {
      this.point(c, 810 + this.rand() * 30, 620 + this.rand() * 12, 4, 4, 165);
    }
  }

  private drawWindows(c: CanvasRenderingContext2D) {
    const win = (x: number, y: number, w: number, h: number, d = 5) => {
      const s = 0.27;
      const a: Pt = [x, y];
      const b: Pt = [x + w, y + w * s];
      const cc: Pt = [x + w + 3, y + w * s + h];
      const e: Pt = [x + 3, y + h];
      this.line(c, [a, b, cc, e, a], '#c4c41c', 1);
      this.line(c, [b, [b[0] + d, b[1] - d], [cc[0] + d, cc[1] - d], cc], '#c4c41c', 1);
    };
    UPPER_WINDOWS.forEach((x) => win(x, 440 + (x - 841) * 0.27, 18, 32));
    LOWER_WINDOWS.forEach((x) => win(x, 487 + (x - 843) * 0.2, 20, 32));
    win(825, 541, 42, 62, 8);
    win(978, 564, 32, 46, 6);
    win(1022, 577, 32, 46, 8);
    win(1069, 593, 30, 36, 6);
    win(1118, 600, 24, 38, 5);
    win(1153, 600, 30, 46, 5);
    win(1210, 490, 14, 34, 4);
    win(1215, 590, 22, 40, 4);
    [[1246, 446], [1250, 475], [1253, 510], [1258, 535], [1250, 558]].forEach(([x, y]) => win(x, y, 7, 15, 3));
  }

  render() {
    return html`<canvas width="1229" height="805"></canvas>`;
  }
}

@customElement('app-root')
export class AppRoot extends LitElement {
  static styles = css`
    :host {
      display: block;
      width: 1848px;
      height: 999px;
      overflow: hidden;
      background: #f2f1f0;
      font-family: 'Noto Sans', sans-serif;
      color: #3c3c3c;
    }
    .ico {
      display: flex;
      align-items: center;
      justify-content: center;
      width: 36px;
      height: 36px;
      flex: none;
    }
    .menubar {
      display: flex;
      align-items: center;
      height: 23px;
      background: #3c3b37;
      color: #dfdbd2;
      font-size: 14px;
    }
    .logo {
      display: block;
      width: 15px;
      height: 19px;
      margin-right: 3px;
    }
    .menu-item {
      padding: 0 10.3px;
      line-height: 23px;
    }
    .win-btns {
      margin-left: auto;
      display: flex;
      gap: 3px;
    }
    .win {
      display: block;
    }
    .toolbar {
      display: flex;
      align-items: center;
      height: 40px;
      background: #f2f1f0;
    }
    .grip {
      width: 11px;
      height: 16px;
      flex: none;
      background: repeating-linear-gradient(#cfcdc8 0 1px, transparent 1px 3px) center / 5px 11px no-repeat;
    }
    .grip.dots {
      width: 13px;
    }
    .sep {
      width: 11px;
      height: 22px;
      flex: none;
      background: linear-gradient(#d9d7d2, #d9d7d2) center / 1px 100% no-repeat;
    }
    .main {
      display: flex;
      height: 936px;
    }
    .ltool {
      width: 40px;
      flex: none;
      box-sizing: border-box;
      padding-left: 6px;
      display: flex;
      flex-direction: column;
      align-items: center;
    }
    .vgrip {
      width: 34px;
      height: 11px;
      flex: none;
      background: repeating-linear-gradient(90deg, #cfcdc8 0 1px, transparent 1px 3px) center / 7px 5px no-repeat;
    }
    .vgrip.tall {
      height: 13px;
    }
    .on {
      border: 1px solid #b9b7b2;
      border-radius: 4px;
      background: linear-gradient(#f4f3f1, #dcdad6);
      box-sizing: border-box;
      width: 34px;
      height: 32px;
      margin: 2px 0;
    }
    .center {
      flex: 1;
      display: flex;
      flex-direction: column;
      min-width: 0;
    }
    .upper {
      display: flex;
      height: 804px;
    }
    .dock {
      width: 480px;
      flex: none;
      display: flex;
      flex-direction: column;
    }
    .title {
      display: flex;
      align-items: center;
      justify-content: space-between;
      height: 27px;
      padding: 0 9px 0 8px;
      font-size: 14px;
      color: #5e5e5e;
    }
    .title > span:first-child {
      position: relative;
      top: -1px;
    }
    .float {
      display: block;
    }
    .tree-wrap {
      display: flex;
      gap: 3px;
      margin: 7px 0 0 15px;
    }
    .tree {
      box-sizing: border-box;
      width: 434px;
      height: 357px;
      border: 1px solid #bfbdb8;
      background: #fff;
      overflow: hidden;
      font-size: 14.5px;
      color: #404040;
    }
    .row {
      display: flex;
      align-items: center;
      height: 22px;
      background: linear-gradient(#e9e8e6, #dbdad7);
    }
    .row.root {
      background: #fff;
      border-bottom: 1px solid #e2e1de;
      height: 21px;
    }
    .row .gut {
      width: 20px;
      height: 100%;
      flex: none;
      background: linear-gradient(#edecea, #e3e2df);
    }
    .exp-cell {
      width: 20px;
      display: flex;
      justify-content: center;
      flex: none;
    }
    .guide {
      width: 20px;
      height: 100%;
      flex: none;
      background: #e9e8e6 linear-gradient(#c9c6c0, #c9c6c0) 9px 0 / 2px 100% no-repeat;
    }
    .guide.tick {
      position: relative;
    }
    .guide.tick::after {
      content: '';
      position: absolute;
      left: 11px;
      top: 10px;
      width: 9px;
      height: 2px;
      background: #d5d3ce;
    }
    .cb {
      flex: none;
      margin: 0 9px 0 6px;
      display: block;
    }
    .root .cb {
      margin-left: 6px;
      margin-right: 8px;
    }
    .cloud,
    .folder {
      flex: none;
      display: block;
      margin-right: 6px;
    }
    .label {
      white-space: nowrap;
    }
    .sb {
      width: 13px;
      flex: none;
      box-sizing: border-box;
      border: 1px solid #d2d0cb;
      border-radius: 7px;
      background: #ecebe8;
      display: flex;
      flex-direction: column;
      align-items: center;
    }
    .tree-sb {
      height: 357px;
    }
    .arrow {
      width: 0;
      height: 0;
      border-left: 3px solid transparent;
      border-right: 3px solid transparent;
      flex: none;
    }
    .arrow.up {
      border-bottom: 3px solid #aaa8a3;
      margin: 5px 0 3px;
    }
    .arrow.down {
      border-top: 4px solid #6a6862;
      margin-top: auto;
      margin-bottom: 5px;
    }
    .thumb {
      box-sizing: border-box;
      width: 13px;
      border: 1px solid #c6c4bf;
      border-radius: 7px;
      background: linear-gradient(90deg, #e9e8e5, #fafaf9 60%, #e3e2df);
      display: flex;
      align-items: center;
      justify-content: center;
      flex: none;
    }
    .thumb i {
      display: block;
      width: 5px;
      height: 7px;
      background: repeating-linear-gradient(#b5b3ae 0 1px, transparent 1px 3px);
    }
    .tree-thumb {
      height: 89px;
    }
    .props {
      box-sizing: border-box;
      width: 450px;
      height: 354px;
      margin: 9px 0 0 15px;
      background: #fff;
      border: 1px solid #bfbdb8;
    }
    .prop-title {
      margin-top: 14px;
    }
    .prop-title > span:first-child {
      top: 0;
    }
    .view {
      flex: 1;
      position: relative;
      background: linear-gradient(#0a6190, #000);
      overflow: hidden;
    }
    .banner {
      position: relative;
      z-index: 1;
      height: 27px;
      line-height: 27px;
      padding-left: 11px;
      background: #9dc23c;
      color: #161616;
      font-size: 14.45px;
      white-space: nowrap;
    }
    .scale {
      position: absolute;
      left: 860px;
      top: 771px;
      width: 299px;
      color: #e4e4e4;
      font-size: 12px;
      text-align: center;
    }
    .scale-line {
      box-sizing: border-box;
      height: 7px;
      border-left: 1px solid #fff;
      border-right: 1px solid #fff;
      background: linear-gradient(#fff, #fff) center / 100% 2px no-repeat;
    }
    .scale span {
      display: block;
      margin-top: 3px;
      line-height: 15px;
    }
    .axes {
      position: absolute;
      left: 1174px;
      top: 731px;
    }
    .console {
      height: 132px;
      flex: none;
    }
    .console .title {
      margin-top: 5px;
      padding-right: 3px;
    }
    .console-btns {
      display: flex;
      gap: 6px;
    }
    .console-wrap {
      display: flex;
      gap: 3px;
      margin: 8px 0 0 15px;
    }
    .log {
      box-sizing: border-box;
      width: 1669px;
      height: 85px;
      background: #fff;
      border: 1px solid #bfbdb8;
      font-size: 14.5px;
      color: #262626;
    }
    .log div {
      height: 19px;
      line-height: 19px;
      padding-left: 3px;
      white-space: nowrap;
    }
    .log div:nth-child(odd) {
      background: #eeeeee;
    }
    .console-sb {
      height: 85px;
    }
    .trough {
      width: 11px;
      height: 25px;
      flex: none;
      background: #dddcd8;
      border-radius: 6px 6px 0 0;
    }
    .log-thumb {
      height: 34px;
    }
    .rtool {
      width: 99px;
      flex: none;
      box-sizing: border-box;
      padding-left: 5px;
      display: flex;
      flex-direction: column;
      align-items: center;
    }
    .shader-label {
      height: 25px;
      line-height: 24px;
      font-size: 14.5px;
      color: #4a4a4a;
      white-space: nowrap;
    }
  `;

  private menus = [
    html`<u>F</u>ile`,
    html`Edit`,
    html`Tools`,
    html`<u>D</u>isplay`,
    html`Plugins`,
    html`3D <u>V</u>iews`,
    html`<u>H</u>elp`,
  ];

  private children1 = [
    'door_3', 'door_2', 'door_1', 'window_40', 'window_39', 'window_38', 'window_37',
    'window_36', 'window_35', 'window_34', 'window_33', 'window_32', 'window_31', 'window_30', 'window_29',
  ];

  private topBar: string[] = [
    'grip', 'open', 'save', 'sep', 'pick', 'list', 'segment', 'sheep', 'merge', 'del', 'sep',
    'seg2', 'normal', 'spatter', 'tile', 'pts1', 'pts2', 'ccc', 'figure', 'checker', 'sor', 'sep',
    'cut', 'move', 'box', 'star', 'dots',
    'hist', 'stats', 'minmax', 'sfdel', 'plus', 'calc', 'sf', 'dots',
    'kd', 'fm', 'shp', 'csv', 'disk', 'globe', 'dots',
    'sred', 'sgrey', 'unroll',
  ];

  private renderTop(name: string) {
    if (name === 'grip') return html`<span class="grip"></span>`;
    if (name === 'dots') return html`<span class="grip dots"></span>`;
    if (name === 'sep') return html`<span class="sep"></span>`;
    return icon(name);
  }

  private leftBar() {
    const cubeBtn = (face: string) =>
      html`<span class="ico"><svg viewBox="0 0 32 32" width="32" height="32">${cube(face)}</svg></span>`;
    const dropdown = (shape: TemplateResult) =>
      html`<span class="ico"><svg viewBox="0 0 32 32" width="32" height="32">${shape}<path d="M24 15h7l-3.500 4z" fill="#888"/></svg></span>`;
    return html`
      <span class="vgrip"></span>
      ${icon('wrench')}${icon('camera')}${icon('oneone')}${icon('cross')}
      <span class="ico on">
        <svg viewBox="0 0 32 32" width="32" height="32">${ICONS.auto}</svg>
      </span>
      ${icon('persp')}
      ${dropdown(svg`<path d="M2 11l5-5h13v13l-5 6H2z" fill="#b4b4dc"/><path d="M2 11h13v14H2z" fill="#8f8fc4"/><path d="M2 11h6v14H2z" fill="#a9a9d2"/>`)}
      ${dropdown(svg`<circle cx="12" cy="16" r="8" fill="none" stroke="#9fd8c0"/><circle cx="12" cy="16" r="9" fill="none" stroke="#e8b8c8"/><circle cx="12" cy="16" r="6" fill="none" stroke="#b8c8ee"/><circle cx="12" cy="16" r="3" fill="#ecdcb0"/>`)}
      ${icon('glass')}
      ${cubeBtn('top')}${cubeBtn('front')}${cubeBtn('left')}${cubeBtn('back')}${cubeBtn('right')}${cubeBtn('bottom')}
      ${icon('front')}${icon('backc')}${icon('flickr')}
    `;
  }

  private treeRows() {
    return html`
      <div class="row root">
        <span class="exp-cell">${expander}</span>
        ${checkbox}
        <svg class="folder" viewBox="0 0 15 14" width="15" height="14">
          <path d="M1 3l5-2 2 2 6 2v8l-9 0-4-3z" fill="#d9a52a" stroke="#a87f1c" stroke-width=".6"/>
          <path d="M1 5l8 3v5l-8-4z" fill="#e8bd45"/>
        </svg>
        <span class="label">building_10_backup6.bin (/home/user/Data)</span>
      </div>
      <div class="row">
        <span class="gut"></span>
        <span class="exp-cell">${expander}</span>
        ${checkbox}${cloudIcon}
        <span class="label">building_1</span>
      </div>
      ${this.children1.map(
        (n) => html`<div class="row">
          <span class="gut"></span>
          <span class="guide"></span>
          <span class="guide tick"></span>
          ${checkbox}${cloudIcon}
          <span class="label">building_1_${n}</span>
        </div>`
      )}
    `;
  }

  private rightBar() {
    const grey = ['clap', 'brush', 'compass', 'sfgrey', 'ss', 'north', 'hpr', 'm3c2', 'pcv', 'penta'];
    return html`
      <span class="vgrip"></span>
      ${icon('stop')}
      <span class="shader-label">Blur (shader)</span>
      <span class="ico on"><svg viewBox="0 0 32 32" width="32" height="32">${ICONS.edl}</svg></span>
      ${icon('ssao')}
      <span class="vgrip tall"></span>
      ${grey.map((n) => icon(n))}
    `;
  }

  render() {
    return html`
      <div class="menubar">
        <svg class="logo" viewBox="0 0 15 19">
          <rect width="15" height="19" fill="#c8d4dc"/>
          <text x="7.500" y="14" text-anchor="middle" font-size="12" font-family="Liberation Sans" fill="#1a70b0">CC</text>
        </svg>
        ${this.menus.map((m) => html`<span class="menu-item">${m}</span>`)}
        <span class="win-btns">
          <svg class="win" viewBox="0 0 16 16" width="16" height="16"><rect width="16" height="16" rx="3" fill="#f4f3f1"/><rect x="4" y="10" width="8" height="2" fill="#111"/></svg>
          <svg class="win" viewBox="0 0 16 16" width="16" height="16"><rect x=".5" y=".5" width="15" height="15" rx="3" fill="#3c3b37" stroke="#dfdbd2"/><path d="M6.500 3.500h6v6h-6zM3.500 6.500h6v6h-6z" fill="#3c3b37" stroke="#dfdbd2"/></svg>
          <svg class="win" viewBox="0 0 16 16" width="16" height="16"><rect x=".5" y=".5" width="15" height="15" rx="3" fill="#3c3b37" stroke="#dfdbd2"/><path d="M4 4l8 8M12 4l-8 8" stroke="#dfdbd2" stroke-width="2"/></svg>
        </span>
      </div>
      <div class="toolbar">${this.topBar.map((n) => this.renderTop(n))}</div>
      <div class="main">
        <div class="ltool">${this.leftBar()}</div>
        <div class="center">
          <div class="upper">
            <div class="dock">
              <div class="title"><span>DB Tree</span>${floatIcon}</div>
              <div class="tree-wrap">
                <div class="tree">${this.treeRows()}</div>
                <div class="sb tree-sb">
                  <span class="arrow up"></span>
                  <div class="thumb tree-thumb"><i></i></div>
                  <span class="arrow down"></span>
                </div>
              </div>
              <div class="title prop-title"><span>Properties</span>${floatIcon}</div>
              <div class="props"></div>
            </div>
            <div class="view">
              <cloud-view></cloud-view>
              <div class="banner">[GL filter] EyeDome Lighting (disable normals and increase points size for a better result!)</div>
              <div class="scale">
                <div class="scale-line"></div>
                <span>20</span>
              </div>
              <svg class="axes" viewBox="0 0 60 60" width="60" height="60">
                <path d="M20 43 6 57" stroke="#f01010" stroke-width="2.500"/>
                <path d="M20 43l21 6" stroke="#10f010" stroke-width="2.500"/>
                <path d="M20 43l-3-21" stroke="#10a0f0" stroke-width="2.500"/>
              </svg>
            </div>
          </div>
          <div class="console">
            <div class="title">
              <span>Console</span>
              <span class="console-btns">${floatIcon}${closeIcon}</span>
            </div>
            <div class="console-wrap">
              <div class="log">
                <div>[13:03:15] Note: go to &lt;&lt; Display &gt; Shaders &amp; Filters &gt; No filter &gt;&gt; to disable GL filter</div>
                <div>[13:03:19] New point size: 2</div>
                <div>[13:03:19] New point size: 3</div>
                <div>[13:03:20] New point size: 4</div>
              </div>
              <div class="sb console-sb">
                <span class="arrow up"></span>
                <div class="trough"></div>
                <div class="thumb log-thumb"><i></i></div>
                <span class="arrow down"></span>
              </div>
            </div>
          </div>
        </div>
        <div class="rtool">${this.rightBar()}</div>
      </div>
    `;
  }
}
